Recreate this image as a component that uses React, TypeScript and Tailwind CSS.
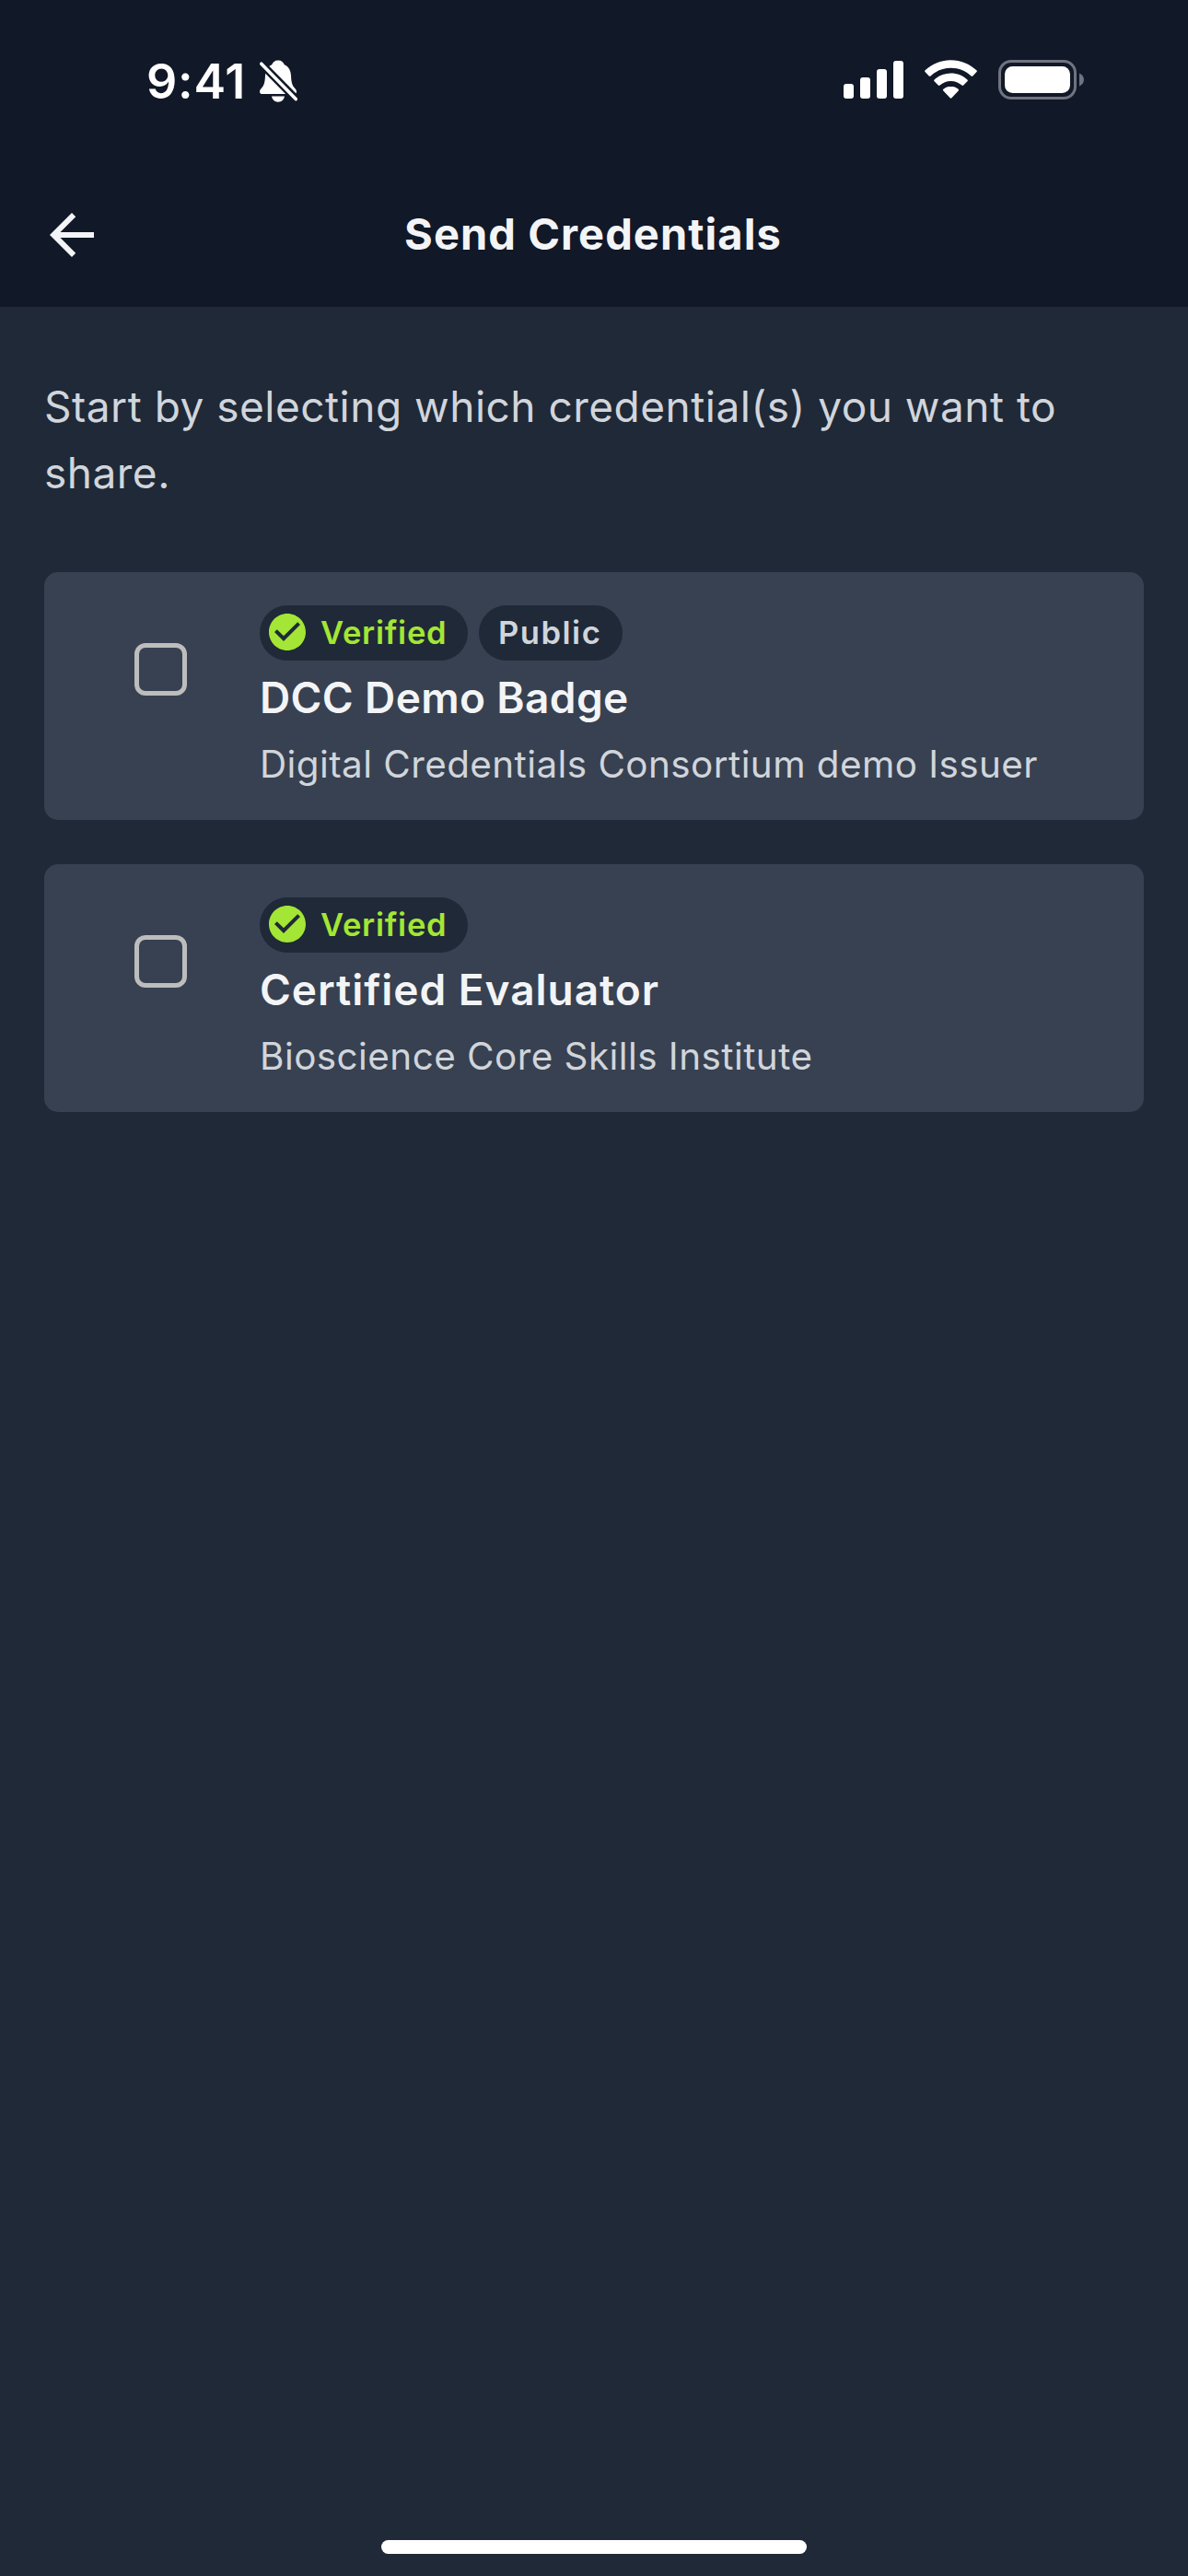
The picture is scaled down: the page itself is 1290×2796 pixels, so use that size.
import React from "react";
import { MdArrowBack, MdCheckCircle } from "react-icons/md";

type Credential = {
  title: string;
  issuer: string;
  isPublic: boolean;
  titleSpacing: string;
  issuerSpacing: string;
};

const credentials: Credential[] = [
  {
    title: "DCC Demo Badge",
    issuer: "Digital Credentials Consortium demo Issuer",
    isPublic: true,
    titleSpacing: "tracking-[0.37px]",
    issuerSpacing: "tracking-[0.44px]",
  },
  {
    title: "Certified Evaluator",
    issuer: "Bioscience Core Skills Institute",
    isPublic: false,
    titleSpacing: "tracking-[0.96px]",
    issuerSpacing: "tracking-[0.46px]",
  },
];

function BellOff() {
  return (
    <svg className="h-[48px] w-[44px]" viewBox="0 0 44 48" fill="#fff">
      <path d="M21 1.500c-3.600 0-6 2.100-6.800 4.800-4.500 1.900-6.900 6.200-7.200 11.700-.3 7.500-1.300 10.800-4.100 13.700C1.600 33 1 34.200 1 35.400 1 37 2.200 38 4 38h34c1.900 0 3-1 3-2.600 0-1.200-.6-2.400-1.900-3.700-2.800-2.900-3.800-6.200-4.100-13.700-.3-5.500-2.700-9.800-7.200-11.700C27 3.600 24.600 1.500 21 1.500z" />
      <path d="M14 40.600h14c-.6 3.700-3.400 6.100-7 6.100s-6.400-2.400-7-6.100z" />
      <path d="M3 5.500L41 44" stroke="#111827" strokeWidth="8.500" />
      <path d="M2.800 5.200L40.200 43.600" stroke="#fff" strokeWidth="3.600" strokeLinecap="round" />
    </svg>
  );
}

function Signal() {
  return (
    <svg className="h-[43px] w-[65px]" viewBox="0 0 65 43" fill="#fff">
      <rect x="0" y="26" width="11" height="16" rx="3" />
      <rect x="18" y="19" width="11" height="23" rx="3" />
      <rect x="36" y="10" width="11" height="32" rx="3" />
      <rect x="54" y="1" width="11" height="41" rx="3" />
    </svg>
  );
}

function Wifi() {
  return (
    <svg className="ml-[23px] h-[43px] w-[57px]" viewBox="0 0 57 43" fill="#fff">
      <path d="M28.500 0.200C17.800 0.200 8 4.400 0.600 11.300c-.6.500-.6 1.300-.1 1.800l4.200 4.300c.5.500 1.200.5 1.800 0C12.300 12 20 8.800 28.500 8.800s16.200 3.200 22 8.600c.6.500 1.300.5 1.800 0l4.200-4.300c.5-.5.5-1.300-.1-1.800C49 4.400 39.200.2 28.500.2z" />
      <path d="M28.500 14.500c-6.900 0-13.200 2.600-17.900 7-.6.500-.6 1.300 0 1.800l4.200 4.300c.5.500 1.200.5 1.800 0 3.200-2.800 7.300-4.600 11.900-4.600s8.700 1.800 11.900 4.600c.6.500 1.300.5 1.800 0l4.200-4.300c.6-.5.6-1.300 0-1.800-4.700-4.400-11-7-17.900-7z" />
      <path d="M28.500 28.800c-3.100 0-5.900 1.100-8.100 2.900-.6.500-.6 1.300-.1 1.800l7.300 7.800c.5.500 1.300.5 1.800 0l7.300-7.800c.5-.5.5-1.300-.1-1.800-2.200-1.800-5-2.900-8.100-2.900z" />
    </svg>
  );
}

function Battery() {
  return (
    <svg className="ml-[23px] h-[43px] w-[94px]" viewBox="0 0 94 43">
      <rect x="1.500" y="1.500" width="82" height="40" rx="12.500" fill="none" stroke="#707480" strokeWidth="3" />
      <rect x="7" y="7" width="71" height="29" rx="8.500" fill="#fff" />
      <path d="M88 14.500c3 1.200 5 3.900 5 7s-2 5.800-5 7z" fill="#707480" />
    </svg>
  );
}

function StatusBar() {
  return (
    <div className="flex h-[177px] items-start pl-[159px]">
      <div className="mt-[59px] h-[60px] w-[122px] whitespace-nowrap text-[52px] font-semibold leading-[60px] tracking-[0.8px] text-white">
        9:41
      </div>
      <div className="mt-[64px]">
        <BellOff />
      </div>
      <div className="ml-auto mr-[112px] mt-[65px] flex">
        <Signal />
        <Wifi />
        <Battery />
      </div>
    </div>
  );
}

function CredentialCard({ item }: { item: Credential }) {
  return (
    <div className="flex h-[269px] rounded-[15px] bg-[#374151] pl-[98px]">
      <div className="mt-[77px] size-[57px] shrink-0 rounded-[12px] border-[5px] border-[#bdbdbd]" />
      <div className="ml-[79px] pt-[36px]">
        <div className="flex h-[60px] gap-[12px] text-[34.6px] font-semibold leading-[58px]">
          <div className="flex w-[226px] items-center rounded-full bg-[#1f2937] pl-[6px] text-[#a3e635]">
            <MdCheckCircle className="mb-[2px] size-[48px] shrink-0" />
            <span className="mb-[2px] ml-[12px] tracking-[0.75px]">Verified</span>
          </div>
          {item.isPublic && (
            <div className="w-[156px] rounded-full bg-[#1f2937] pl-[21px] tracking-[1.5px] text-[#d1d5db]">
              Public
            </div>
          )}
        </div>
        <h2 className={`mt-[4px] whitespace-nowrap text-[46px] font-semibold leading-[72px] text-[#f3f4f6] ${item.titleSpacing}`}>
          {item.title}
        </h2>
        <p className={`mt-[7px] whitespace-nowrap text-[40.4px] leading-[60px] text-[#d1d5db] ${item.issuerSpacing}`}>
          {item.issuer}
        </p>
      </div>
    </div>
  );
}

export default function App() {
  return (
    <div className="flex h-[2796px] w-[1290px] flex-col overflow-hidden bg-[#1f2937] font-['Inter',sans-serif]">
      <header className="h-[333px] shrink-0 bg-[#111827]">
        <StatusBar />
        <div className="grid h-[156px] grid-cols-[120px_1fr_120px] items-center">
          <MdArrowBack className="ml-[42px] size-[72px] text-[#f3f4f6]" />
          <h1 className="pb-[3px] pr-[2px] text-center text-[47px] font-bold leading-[72px] tracking-[1.07px] text-[#f3f4f6]">
            Send Credentials
          </h1>
        </div>
      </header>
      <main className="flex-1 px-[48px] pt-[72px]">
        <p className="text-[46px] leading-[72px] tracking-[0.5px] text-[#d1d5db]">
          Start by selecting which credential(s) you want to share.
        </p>
        <div className="mt-[72px] flex flex-col gap-[48px]">
          {credentials.map((item) => (
            <CredentialCard key={item.title} item={item} />
          ))}
        </div>
      </main>
      <div className="mx-auto mb-[24px] h-[15px] w-[462px] rounded-full bg-white" />
    </div>
  );
}
